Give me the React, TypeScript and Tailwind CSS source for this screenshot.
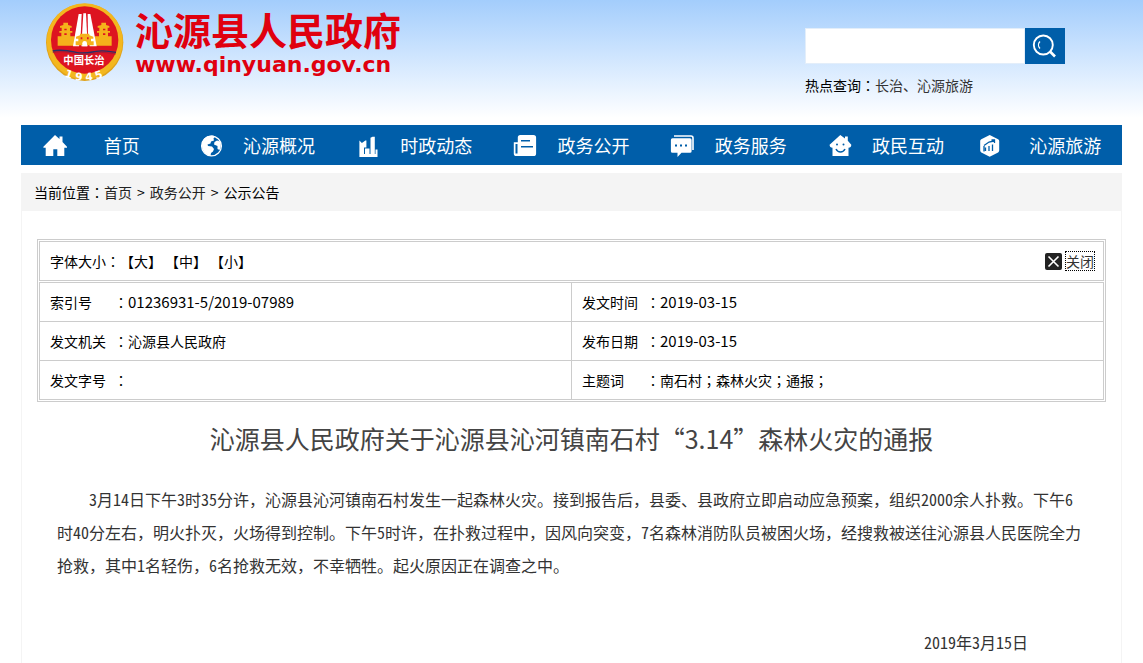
import type { ReactNode } from 'react';

const navItems: { label: string; icon: ReactNode }[] = [
    {
        label: '首页',
        icon: <path d="M34 10l4.500 4v-2.500h3v5.500l4.500 4.700v1h-2.700V31h-7v-6.700h-4V31h-7.600v-8.300h-2.300v-1z" />,
    },
    {
        label: '沁源概况',
        icon: (
            <>
                <circle cx="33.500" cy="21" r="9.900" fill="none" stroke="currentColor" strokeWidth="1.300" />
                <path d="M24 18c1-4 4.500-7.500 9.500-7.500 2 0 3 .5 3.500 1l-1.500 2 .5 2-3 1-.5 2-3 1 .5 1.500 4 .5 2 2.500-1 2.500-2 1.500-.5 3c-4-1-8.500-4.500-8.500-10z" />
                <path d="M39 15.500l3 1c1.200 3 1.200 6-.5 8.500l-2-1v-3l-3.500-1.500.5-2.500z" />
            </>
        ),
    },
    {
        label: '时政动态',
        icon: (
            <>
                <path d="M23.400 15.500l2.500 2.500 3.500-2.500h1v7H28V32h-4.600z" />
                <path d="M34.500 12.700l2-1h2.300V32h-4.300z" />
                <path d="M29 23.500h4.500V32H29zM39.500 24.500h2V32h-2zM26 29h14v3H26z" />
            </>
        ),
    },
    {
        label: '政务公开',
        icon: (
            <>
                <path d="M27.500 10h13a2.600 2.600 0 0 1 2.600 2.600v15.800A2.600 2.600 0 0 1 40.500 31H23.400a2.600 2.600 0 0 1-2.600-2.600V17.300h4v-4.700A2.600 2.600 0 0 1 27.500 10z" />
                <path d="M22.500 19h2v9.500h-2zM28 15h9v1.500h-9zM28 21h12v1.500H28z" className="fill-[#005ea9]" />
            </>
        ),
    },
    {
        label: '政务服务',
        icon: (
            <>
                <path d="M24 11h17a2 2 0 0 1 2 2v12" fill="none" stroke="currentColor" strokeWidth="1.600" />
                <path d="M22.500 13.300H40a1.600 1.600 0 0 1 1.600 1.600v11.300a1.600 1.600 0 0 1-1.600 1.600h-8.500L27.500 32v-4.200h-5a1.600 1.600 0 0 1-1.600-1.600V14.900a1.600 1.600 0 0 1 1.600-1.600z" />
                <path d="M25 19.500h2v2h-2zM30 19.500h2v2h-2zM35 19.500h2v2h-2z" className="fill-[#005ea9]" />
            </>
        ),
    },
    {
        label: '政民互动',
        icon: (
            <>
                <path d="M33.300 10l4.700 3.500v-2h2.800v4.300l3.500 3.900c0 2-1 3-2.800 3V31h-16v-8.300c-1.800 0-2.900-1-2.900-3z" />
                <circle cx="30" cy="19.500" r="1" className="fill-[#005ea9]" />
                <circle cx="36.500" cy="19.500" r="1" className="fill-[#005ea9]" />
                <path d="M29 24c2 4 7 4 9 0" fill="none" className="stroke-[#005ea9]" strokeWidth="1.500" />
            </>
        ),
    },
    {
        label: '沁源旅游',
        icon: (
            <>
                <path d="M24.700 10l8.400 4.200a2 2 0 0 1 1.100 1.800v9.600a2 2 0 0 1-1.100 1.800l-8.400 4.300-8.400-4.300a2 2 0 0 1-1.100-1.800V16a2 2 0 0 1 1.100-1.800z" />
                <path d="M20.500 26v-3.500M24 26v-5M27.500 26v-6.500M19 20.500l5-3.500 5-1M26.500 15h3v3M19 21v5.500" fill="none" className="stroke-[#005ea9]" strokeWidth="1.300" />
            </>
        ),
    },
];

const details: [string, string, string, string][] = [
    ['索引号', '01236931-5/2019-07989', '发文时间', '2019-03-15'],
    ['发文机关', '沁源县人民政府', '发布日期', '2019-03-15'],
    ['发文字号', '', '主题词', '南石村；森林火灾；通报；'],
];

// Traditional forms centre the mark in its box
function Mark({ children }: { children: string }) {
    return <span lang="zh-TW" className="font-['Noto_Sans_CJK_TC',sans-serif]">{children}</span>;
}

function Emblem() {
    return (
        <svg width="78" height="84" viewBox="48 4 234 252" aria-hidden="true">
            <circle cx="164" cy="125" r="116" fill="#e0a21b" />
            <circle cx="164" cy="122" r="114" fill="#f3b71f" />
            <circle cx="164" cy="118" r="101" fill="#dd1420" />
            <g fill="#f5b21b">
                <path d="M90 76l10-3V66h14v7l11 3v5h-5v10h7v5h-6v11h13v28H83v-28h11V96h-6v-5h7V81h-5z" />
                <path d="M238 76l-10-3V66h-14v7l-11 3v5h5v10h-7v5h6v11h-13v28h51v-28h-11V96h6v-5h-7V81h5z" />
                <path d="M146 40h9l-3 65-5 32h-18z" fill="#fff" />
                <path d="M173 40h8l19 97h-21l-5-32z" fill="#fff" />
                <path d="M160 38h8l5 99h-19z" fill="#fff" />
                <path d="M138 108l12-4v-5h28v5l12 4v6h-7v8h8v12h-54v-12h8v-8h-7z" />
            </g>
            <path d="M103 84h7v5h-7zM219 84h7v5h-7zM103 98h7v5h-7zM219 98h7v5h-7zM152 110h5v6h-5zM171 110h5v6h-5z" fill="#dd1420" />
            <path d="M157 137v-9a7 7 0 0 1 14 0v9z" fill="#fff" />
            <path d="M68 151c28-6 48-1 70 4s38 1 60-3 38 0 60 3" fill="none" stroke="#283266" strokeWidth="4" />
            <path d="M68 156c28-6 48-1 70 4s38 1 60-3 38 0 60 3" fill="none" stroke="#8c1d3c" strokeWidth="2" />
            <text x="162" y="191" textAnchor="middle" fill="#fff" fontSize="31" fontWeight="700" fontFamily="'Noto Sans CJK SC', sans-serif">中国长治</text>
            <g fill="#fff" fontSize="32" fontWeight="700" fontFamily="'DejaVu Sans', sans-serif" textAnchor="middle">
                <text transform="translate(113 231) rotate(18)">1</text>
                <text transform="translate(145 239) rotate(7)">9</text>
                <text transform="translate(178 239) rotate(-6)">4</text>
                <text transform="translate(209 233) rotate(-18)">5</text>
            </g>
        </svg>
    );
}

function Header() {
    return (
        <header className="h-[125px] flex justify-between">
            <a href="#" className="flex items-start gap-[11px] pl-[25px] pt-[2px] text-[#e0000f] font-bold">
                <Emblem />
                <span className="block">
                    <span className="block text-[38px] leading-[54px]">沁源县人民政府</span>
                    <span className="block text-[22px] leading-[18px] font-['DejaVu_Sans',sans-serif]">www.qinyuan.gov.cn</span>
                </span>
            </a>
            <div className="w-[260px] mr-[57px] pt-7">
                <form className="flex" onSubmit={(e) => e.preventDefault()}>
                    <input type="text" aria-label="搜索" className="min-w-0 flex-1 h-9 px-2 bg-white border border-[#e3eefa] outline-none text-sm" />
                    <button aria-label="搜索" className="w-10 h-9 bg-[#005ea9] text-white">
                        <svg width="40" height="36" viewBox="0 0 40 36" fill="none" stroke="currentColor">
                            <circle cx="18.300" cy="17" r="9.500" strokeWidth="1.900" />
                            <path d="M15 13.500c-2 2-2 5 0 7" strokeWidth="1.300" />
                            <path d="M25 23.500l5 5" strokeWidth="2.600" />
                        </svg>
                    </button>
                </form>
                <p className="mt-[11px] text-sm">
                    热点查询<Mark>：</Mark>
                    <a href="#" className="text-[#333]">长治、</a>
                    <a href="#" className="text-[#333]">沁源旅游</a>
                </p>
            </div>
        </header>
    );
}

function Field({ label, value }: { label: string; value: string }) {
    const parts = value.split('；');

    return (
        <div className="flex items-center px-[10px] h-[38px]">
            <span className="flex justify-between w-[78px]">{label}<Mark>：</Mark></span>
            <span className={/^\d/.test(value) ? 'text-[15px]' : ''}>
                {parts.map((part, index) => (
                    <span key={index}>
                        {part}
                        {index < parts.length - 1 && <Mark>；</Mark>}
                    </span>
                ))}
            </span>
        </div>
    );
}

export default function App() {
    return (
        <div lang="zh-CN" className="bg-linear-to-b from-[#a3cdfc] to-white to-[118px] font-['Noto_Sans_CJK_SC',sans-serif] text-black [text-spacing-trim:space-all]">
            <div className="max-w-[1101px] mx-auto">
                <Header />

                <nav className="grid grid-cols-7 bg-[#005ea9] text-white">
                    {navItems.map((item) => (
                        <a key={item.label} href="#" className="flex items-center h-10 pr-1">
                            <svg width="48" height="40" viewBox="0 0 48 40" fill="currentColor" className="shrink-0" aria-hidden="true">{item.icon}</svg>
                            <span className="flex-1 text-center text-lg whitespace-nowrap">{item.label}</span>
                        </a>
                    ))}
                </nav>

                <div className="mt-2 h-[38px] px-[13px] flex items-center bg-[#f4f4f4] text-sm">
                    当前位置<Mark>：</Mark>
                    <a href="#" className="text-[#222]">首页</a>
                    <span className="px-[5px]">&gt;</span>
                    <a href="#" className="text-[#222]">政务公开</a>
                    <span className="px-[5px]">&gt;</span>
                    <a href="#">公示公告</a>
                </div>

                <main className="border-x border-[#f4f4f4] bg-white px-[15px] pt-7 pb-1">
                    <div className="border border-[#ccc] p-px text-sm">
                        <div className="flex items-center justify-between h-10 mb-px border border-[#ccc] pl-[10px] pr-[9px]">
                            <div className="flex gap-[3px]">
                                <span>字体大小<Mark>：</Mark><button>【大】</button></span>
                                <button>【中】</button>
                                <button>【小】</button>
                            </div>
                            <button className="flex items-center gap-1 text-[#333]">
                                <svg width="17" height="17" viewBox="0 0 17 17" aria-hidden="true">
                                    <rect width="17" height="17" rx="2" fill="#222" />
                                    <path d="M3.500 3.500l10 10M13.500 3.500l-10 10" stroke="#fff" strokeWidth="1.600" />
                                </svg>
                                <span className="leading-[18px] outline-1 outline-dotted outline-black">关闭</span>
                            </button>
                        </div>
                        <table className="w-full table-fixed border-collapse">
                            <tbody>
                                {details.map((row) => (
                                    <tr key={row[0]}>
                                        <td className="p-0 border border-[#ccc]"><Field label={row[0]} value={row[1]} /></td>
                                        <td className="p-0 border border-[#ccc]"><Field label={row[2]} value={row[3]} /></td>
                                    </tr>
                                ))}
                            </tbody>
                        </table>
                    </div>

                    <h1 className="mt-[18px] text-center text-[25px] leading-9 text-[#444]">沁源县人民政府关于沁源县沁河镇南石村“3.14”森林火灾的通报</h1>

                    <article className="mt-[27px] px-5 text-base text-[#333] font-['Noto_Sans_Mono_CJK_SC','Noto_Sans_CJK_SC',sans-serif]">
                        <p className="indent-8 leading-[33px]">
                            3月14日下午3时35分许，沁源县沁河镇南石村发生一起森林火灾。接到报告后，县委、县政府立即启动应急预案，组织2000余人扑救。下午6时40分左右，明火扑灭，火场得到控制。下午5时许，在扑救过程中，因风向突变，7名森林消防队员被困火场，经搜救被送往沁源县人民医院全力抢救，其中1名轻伤，6名抢救无效，不幸牺牲。起火原因正在调查之中。
                        </p>
                        <p className="mt-11 pr-[58px] text-right leading-[33px]">2019年3月15日</p>
                    </article>
                </main>
            </div>
        </div>
    );
}
